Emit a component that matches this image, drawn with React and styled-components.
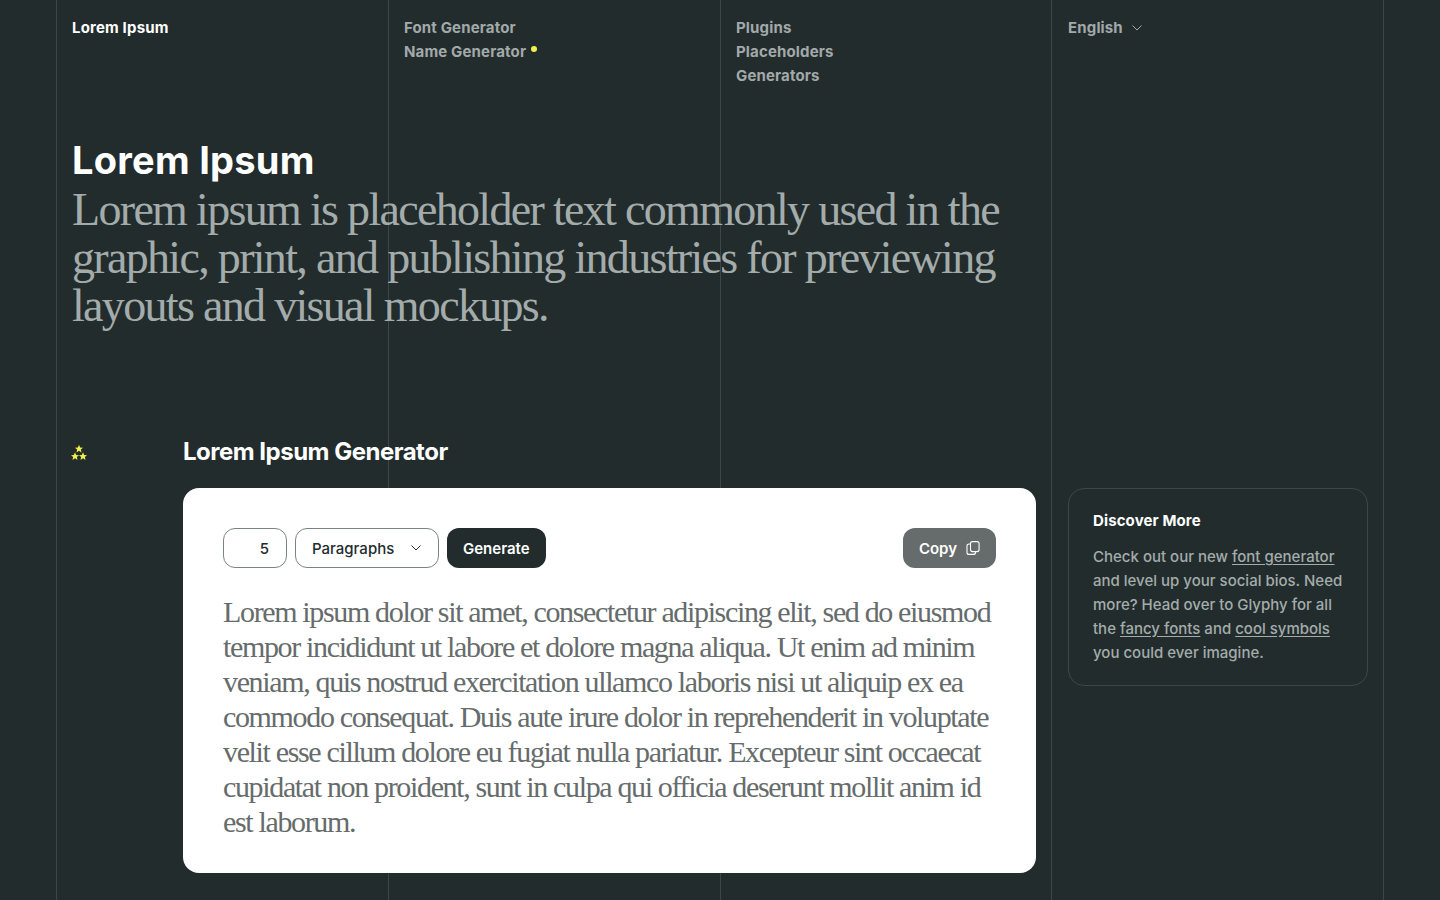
import React from 'react';
import styled, { createGlobalStyle } from 'styled-components';

const sans = '"Inter", "Liberation Sans", sans-serif';
const serif = '"Liberation Serif", serif';

const GlobalStyle = createGlobalStyle`
  html, body {
    margin: 0;
    background: #222c2d;
  }
  body {
    font-family: ${sans};
    -webkit-font-smoothing: antialiased;
  }
`;

const Page = styled.div`
  position: relative;
  height: 900px;
  overflow: hidden;
  padding: 0 56px;
  box-sizing: border-box;
`;

/* the vertical rules behind the page */
const Rules = styled.div`
  position: absolute;
  inset: 0 56px;
  display: grid;
  grid-template-columns: 332px 332px 331px 333px;
  pointer-events: none;
`;

const Rule = styled.div`
  border-left: 1px solid #3d4748;
  &:last-child {
    border-right: 1px solid #3d4748;
  }
`;

const Nav = styled.nav`
  position: relative;
  display: grid;
  grid-template-columns: repeat(4, 332px);
  height: 136px;
  box-sizing: border-box;
  padding-top: 16px;
`;

const NavColumn = styled.div`
  display: flex;
  flex-direction: column;
  align-items: flex-start;
  padding-left: 16px;
`;

const Brand = styled.a`
  font-size: 15px;
  line-height: 24px;
  font-weight: 700;
  letter-spacing: 0.17px;
  color: #fff;
`;

const NavLink = styled.a`
  position: relative;
  font-size: 15px;
  line-height: 24px;
  font-weight: 700;
  letter-spacing: 0.15px;
  color: #a2a9a9;
`;

const NewDot = styled.span`
  position: absolute;
  top: 6px;
  right: -11px;
  width: 6px;
  height: 6px;
  border-radius: 50%;
  background: #f2f04a;
`;

const Language = styled.div`
  display: flex;
  align-items: center;
  gap: 9px;
  color: #a2a9a9;
`;

const Hero = styled.header`
  position: relative;
  padding-left: 16px;
  height: 300px;
`;

const Title = styled.h1`
  margin: 0;
  font-family: ${sans};
  font-size: 38px;
  line-height: 48px;
  font-weight: 700;
  letter-spacing: 0.25px;
  color: #fff;
`;

const Lead = styled.p`
  margin: 2px 0 0;
  width: 960px;
  font-family: ${serif};
  font-size: 46px;
  line-height: 48px;
  letter-spacing: -1.68px;
  color: #a4acab;
`;

const Generator = styled.section`
  position: relative;
  display: grid;
  grid-template-columns: 127px 853px 300px;
  column-gap: 0;
`;

const Stars = styled.svg`
  margin: 9px 0 0 15px;
  display: block;
`;

const GeneratorMain = styled.div`
  display: flex;
  flex-direction: column;
  gap: 20px;
`;

const GeneratorTitle = styled.h2`
  margin: 0;
  font-size: 24px;
  line-height: 32px;
  font-weight: 700;
  letter-spacing: -0.5px;
  color: #fff;
`;

const Card = styled.div`
  background: #fff;
  border-radius: 16px;
  padding: 40px;
  height: 385px;
  box-sizing: border-box;
`;

const Controls = styled.div`
  display: flex;
  align-items: center;
  gap: 8px;
`;

const Field = styled.div`
  display: flex;
  align-items: center;
  justify-content: ${(props) => (props.$number ? 'flex-end' : 'space-between')};
  width: ${(props) => props.$width}px;
  height: 40px;
  box-sizing: border-box;
  padding: ${(props) => (props.$number ? '0 17px 0 0' : '0 17px 0 16px')};
  border: 1px solid #7b8282;
  border-radius: 12px;
  font-size: 15px;
  font-weight: 500;
  color: #222c2d;
`;

const Button = styled.button`
  display: flex;
  align-items: center;
  gap: 9px;
  height: 40px;
  padding: 0 16px;
  border: 0;
  border-radius: 12px;
  font-family: ${sans};
  font-size: 15px;
  font-weight: 600;
  color: #fff;
  background: ${(props) => (props.$muted ? '#666c6b' : '#222c2d')};
  margin-left: ${(props) => (props.$push ? 'auto' : '0')};
`;

const Output = styled.p`
  margin: 26px 0 0;
  font-family: ${serif};
  font-size: 30px;
  line-height: 35px;
  letter-spacing: -1.35px;
  color: #666c6b;
`;

const Sidebar = styled.aside`
  margin-top: 52px;
  margin-left: 32px;
  width: 300px;
  height: 198px;
  box-sizing: border-box;
  padding: 20px 24px;
  border: 1px solid #3d4748;
  border-radius: 16px;
`;

const SidebarTitle = styled.h3`
  margin: 0 0 12px;
  font-size: 15px;
  line-height: 24px;
  font-weight: 700;
  letter-spacing: 0.12px;
  color: #fff;
`;

const SidebarText = styled.p`
  margin: 0;
  font-size: 15px;
  line-height: 24px;
  font-weight: 500;
  color: #a4acab;
  a {
    color: inherit;
    text-decoration: underline;
    text-underline-offset: 2px;
  }
`;

const Chevron = ({ color }) => (
  <svg width="10" height="6" viewBox="0 0 10 6" fill="none">
    <path d="M0.5 0.5L5 5L9.5 0.5" stroke={color} strokeWidth="1" />
  </svg>
);

const CopyIcon = () => (
  <svg width="14" height="14" viewBox="0 0 14 14" fill="none" stroke="#fff" strokeWidth="1.1">
    <rect x="4.5" y="0.6" width="8.6" height="10" rx="2" />
    <path d="M4.5 3H3A2 2 0 0 0 1 5V11.4A2 2 0 0 0 3 13.4H7.5A2 2 0 0 0 9.5 11.4V10.6" />
  </svg>
);

const Star = ({ x, y }) => (
  <polygon
    transform={`translate(${x} ${y}) scale(1.15)`}
    points="0,-3.6 1,-1.2 3.5,-1.1 1.6,0.5 2.2,3 0,1.6 -2.2,3 -1.6,0.5 -3.5,-1.1 -1,-1.2"
    fill="#f2f04a"
  />
);

export default function App() {
  return (
    <Page>
      <GlobalStyle />
      <Rules>
        <Rule />
        <Rule />
        <Rule />
        <Rule />
      </Rules>
      <Nav>
        <NavColumn>
          <Brand>Lorem Ipsum</Brand>
        </NavColumn>
        <NavColumn>
          <NavLink>Font Generator</NavLink>
          <NavLink>
            Name Generator
            <NewDot />
          </NavLink>
        </NavColumn>
        <NavColumn>
          <NavLink>Plugins</NavLink>
          <NavLink>Placeholders</NavLink>
          <NavLink>Generators</NavLink>
        </NavColumn>
        <NavColumn>
          <Language>
            <NavLink>English</NavLink>
            <Chevron color="#a2a9a9" />
          </Language>
        </NavColumn>
      </Nav>
      <Hero>
        <Title>Lorem Ipsum</Title>
        <Lead>
          Lorem ipsum is placeholder text commonly used in the graphic, print, and publishing
          industries for previewing layouts and visual mockups.
        </Lead>
      </Hero>
      <Generator>
        <Stars width="16" height="16" viewBox="0 0 16 16">
          <Star x={8} y={4} />
          <Star x={4} y={11.5} />
          <Star x={12} y={11.5} />
        </Stars>
        <GeneratorMain>
          <GeneratorTitle>Lorem Ipsum Generator</GeneratorTitle>
          <Card>
            <Controls>
              <Field $number $width={64}>5</Field>
              <Field $width={144}>
                Paragraphs
                <Chevron color="#222c2d" />
              </Field>
              <Button>Generate</Button>
              <Button $muted $push>
                Copy
                <CopyIcon />
              </Button>
            </Controls>
            <Output>
              Lorem ipsum dolor sit amet, consectetur adipiscing elit, sed do eiusmod tempor
              incididunt ut labore et dolore magna aliqua. Ut enim ad minim veniam, quis nostrud
              exercitation ullamco laboris nisi ut aliquip ex ea commodo consequat. Duis aute irure
              dolor in reprehenderit in voluptate velit esse cillum dolore eu fugiat nulla pariatur.
              Excepteur sint occaecat cupidatat non proident, sunt in culpa qui officia deserunt
              mollit anim id est laborum.
            </Output>
          </Card>
        </GeneratorMain>
        <Sidebar>
          <SidebarTitle>Discover More</SidebarTitle>
          <SidebarText>
            Check out our new <a>font generator</a>
            <br />
            and level up your social bios. Need
            <br />
            more? Head over to Glyphy for all
            <br />
            the <a>fancy fonts</a> and <a>cool symbols</a>
            <br />
            you could ever imagine.
          </SidebarText>
        </Sidebar>
      </Generator>
    </Page>
  );
}
